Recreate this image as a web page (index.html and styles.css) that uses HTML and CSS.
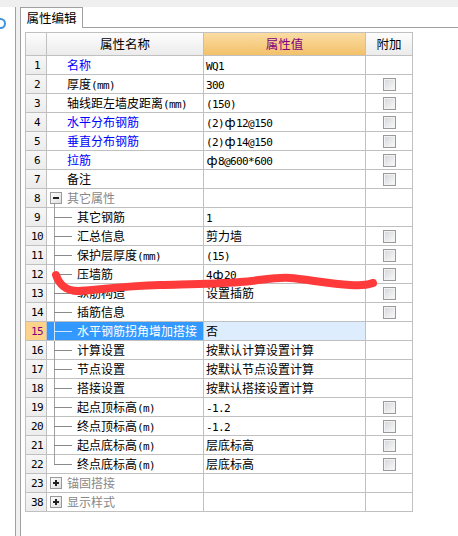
FILE: index.html
```html
<!DOCTYPE html>
<html>
<head>
<meta charset="utf-8">
<link rel="stylesheet" href="styles.css">
</head>
<body>
<div class="top"></div>
<div class="main">
  <div class="side"><span class="ring"></span></div>
  <div class="gutter"></div>
  <div class="panel">
    <div class="tabs"><div class="tab">属性编辑</div></div>
    <div class="body">
      <div class="grid">
        <div class="hd num"></div><div class="hd">属性名称</div><div class="hd hv">属性值</div><div class="hd">附加</div>

        <div class="num">1</div><div class="name l1 blue">名称</div><div class="val"><span><span class="m">WQ1</span></span></div><div class="add"></div>
        <div class="num">2</div><div class="name l1"><span>厚度<span class="m">(mm)</span></span></div><div class="val"><span><span class="m">300</span></span></div><div class="add"><span class="cb"></span></div>
        <div class="num">3</div><div class="name l1"><span>轴线距左墙皮距离<span class="m">(mm)</span></span></div><div class="val"><span><span class="m">(150)</span></span></div><div class="add"><span class="cb"></span></div>
        <div class="num">4</div><div class="name l1 blue">水平分布钢筋</div><div class="val"><span><span class="m">(2)</span><span class="bar">ф</span><span class="m">12@150</span></span></div><div class="add"><span class="cb"></span></div>
        <div class="num">5</div><div class="name l1 blue">垂直分布钢筋</div><div class="val"><span><span class="m">(2)</span><span class="bar">ф</span><span class="m">14@150</span></span></div><div class="add"><span class="cb"></span></div>
        <div class="num">6</div><div class="name l1 blue">拉筋</div><div class="val"><span><span class="bar">ф</span><span class="m">8@600*600</span></span></div><div class="add"><span class="cb"></span></div>
        <div class="num">7</div><div class="name l1">备注</div><div class="val"></div><div class="add"><span class="cb"></span></div>

        <div class="num">8</div><div class="name grp open"><span class="tg minus"></span>其它属性</div><div class="val"></div><div class="add"></div>
        <div class="num">9</div><div class="name kid">其它钢筋</div><div class="val"><span><span class="m">1</span></span></div><div class="add"></div>
        <div class="num">10</div><div class="name kid">汇总信息</div><div class="val">剪力墙</div><div class="add"><span class="cb"></span></div>
        <div class="num">11</div><div class="name kid"><span>保护层厚度<span class="m">(mm)</span></span></div><div class="val"><span><span class="m">(15)</span></span></div><div class="add"><span class="cb"></span></div>
        <div class="num">12</div><div class="name kid">压墙筋</div><div class="val"><span><span class="m">4</span><span class="bar">ф</span><span class="m">20</span></span></div><div class="add"><span class="cb"></span></div>
        <div class="num">13</div><div class="name kid">纵筋构造</div><div class="val">设置插筋</div><div class="add"><span class="cb"></span></div>
        <div class="num">14</div><div class="name kid">插筋信息</div><div class="val"></div><div class="add"><span class="cb"></span></div>
        <div class="num sel">15</div><div class="name kid sel">水平钢筋拐角增加搭接</div><div class="val sel">否</div><div class="add"></div>
        <div class="num">16</div><div class="name kid">计算设置</div><div class="val">按默认计算设置计算</div><div class="add"></div>
        <div class="num">17</div><div class="name kid">节点设置</div><div class="val">按默认节点设置计算</div><div class="add"></div>
        <div class="num">18</div><div class="name kid">搭接设置</div><div class="val">按默认搭接设置计算</div><div class="add"></div>
        <div class="num">19</div><div class="name kid"><span>起点顶标高<span class="m">(m)</span></span></div><div class="val"><span><span class="m">-1.2</span></span></div><div class="add"><span class="cb"></span></div>
        <div class="num">20</div><div class="name kid"><span>终点顶标高<span class="m">(m)</span></span></div><div class="val"><span><span class="m">-1.2</span></span></div><div class="add"><span class="cb"></span></div>
        <div class="num">21</div><div class="name kid"><span>起点底标高<span class="m">(m)</span></span></div><div class="val">层底标高</div><div class="add"><span class="cb"></span></div>
        <div class="num">22</div><div class="name kid last"><span>终点底标高<span class="m">(m)</span></span></div><div class="val">层底标高</div><div class="add"><span class="cb"></span></div>

        <div class="num">23</div><div class="name grp"><span class="tg plus"></span>锚固搭接</div><div class="val"></div><div class="add"></div>
        <div class="num">38</div><div class="name grp"><span class="tg plus"></span>显示样式</div><div class="val"></div><div class="add"></div>
      </div>
    </div>
  </div>
</div>
<svg class="scribble" width="458" height="536" viewBox="0 0 458 536">
  <path d="M56,275 C59,284 66,291 78,291 S120,286 160,285 S215,284 240,282 S275,277 290,278 S330,284 350,285 S368,284 373,283" fill="none" stroke="#ff3a3a" stroke-width="8" stroke-linecap="round" stroke-linejoin="round"/>
</svg>
</body>
</html>
```

FILE: styles.css
```css
html, body {
  margin: 0;
  padding: 0;
}
body {
  position: relative;
  width: 458px;
  height: 536px;
  overflow: hidden;
  background: #fff;
  font-family: "Noto Sans CJK SC", sans-serif;
  font-size: 12px;
  color: #000;
}
.top {
  height: 7px;
  background: #efefef;
}
.main {
  display: flex;
  height: 529px;
}
.side {
  position: relative;
  width: 15px;
  border-right: 1px solid #a0a0a0;
  background: #fff;
  overflow: hidden;
}
.ring {
  position: absolute;
  left: -5px;
  top: 11px;
  width: 7px;
  height: 7px;
  border: 2px solid #3f92de;
  border-radius: 50%;
}
.gutter {
  width: 4px;
  background: #f0f0f0;
}
.panel {
  flex: 1;
  border-left: 1px solid #a0a0a0;
  display: flex;
  flex-direction: column;
}
.tabs {
  display: flex;
  height: 20px;
  border-bottom: 1px solid #a0a0a0;
}
.tab {
  width: 62px;
  height: 21px;
  box-sizing: border-box;
  border: 1px solid #a0a0a0;
  border-left: none;
  border-bottom: none;
  background: #fff;
  display: flex;
  align-items: center;
  justify-content: center;
  line-height: 1;
  font-size: 12.5px;
}
.body {
  padding: 4px 0 0 4px;
}
.grid {
  display: grid;
  grid-template-columns: 21px 157px 162px 47px;
  grid-template-rows: 23px;
  grid-auto-rows: 19px;
  width: max-content;
  border-left: 1px solid #c0c0c0;
  border-top: 1px solid #c0c0c0;
}
.grid > div {
  box-sizing: border-box;
  border-right: 1px solid #c0c0c0;
  border-bottom: 1px solid #c0c0c0;
  display: flex;
  align-items: center;
  white-space: nowrap;
  line-height: 1;
  position: relative;
}
.hd {
  justify-content: center;
  background: linear-gradient(#fdfdfd, #ebebeb);
  font-size: 12.5px;
}
.hd.hv {
  background: linear-gradient(#fbdca3, #f2c169);
  color: #800080;
}
.num {
  justify-content: center;
  background: linear-gradient(#f6f6f6, #ececec);
  font-family: "DejaVu Sans Mono", monospace;
  font-size: 11px;
  letter-spacing: -0.6px;
  padding-left: 2px;
}
.num.hd {
  background: linear-gradient(#fdfdfd, #ebebeb);
}
.num.sel {
  background: #fdd38b;
  color: #800080;
}
.m {
  font-family: "DejaVu Sans Mono", monospace;
  font-size: 11px;
  letter-spacing: -0.6px;
}
.bar {
  display: inline-block;
  width: 12px;
  text-align: center;
  font-size: 13px;
  font-family: "DejaVu Sans", sans-serif;
}
.name.l1 {
  padding-left: 20px;
}
.blue {
  color: #0000ff;
}
.name.grp {
  color: #888;
  padding-left: 3px;
}
.tg {
  position: relative;
  width: 12px;
  height: 12px;
  box-sizing: border-box;
  border: 1px solid #999;
  background: linear-gradient(135deg, #ffffff, #dedede);
  margin-right: 5px;
}
.tg::before {
  content: "";
  position: absolute;
  left: 2px;
  top: 4px;
  width: 6px;
  height: 2px;
  background: #222;
}
.tg.plus::after {
  content: "";
  position: absolute;
  left: 4px;
  top: 2px;
  width: 2px;
  height: 6px;
  background: #222;
}
.name.grp.open::after {
  content: "";
  position: absolute;
  left: 7px;
  top: 15px;
  bottom: -1px;
  width: 1px;
  background: #a0a0a0;
}
.name.kid {
  padding-left: 30px;
}
.name.kid::before {
  content: "";
  position: absolute;
  left: 7px;
  top: 0;
  bottom: -1px;
  width: 1px;
  background: #a0a0a0;
}
.name.kid.last::before {
  bottom: 9px;
}
.name.kid::after {
  content: "";
  position: absolute;
  left: 7px;
  top: 9px;
  width: 18px;
  height: 1px;
  background: #8a8a8a;
}
.name.sel {
  background: #3399ff;
  color: #fff;
}
.name.sel::before,
.name.sel::after {
  background: #cfe6ff;
}
.val {
  padding-left: 2px;
}
.val.sel {
  background: #ddedfd;
}
.add {
  justify-content: center;
}
.cb {
  width: 13px;
  height: 13px;
  box-sizing: border-box;
  border: 1px solid #9a9a9a;
  background: linear-gradient(135deg, #d3d5da, #fbfbfb);
  box-shadow: inset 0 0 0 1px #f2f2f2;
  margin-left: 1px;
}
.scribble {
  position: absolute;
  left: 0;
  top: 0;
  pointer-events: none;
}
```
